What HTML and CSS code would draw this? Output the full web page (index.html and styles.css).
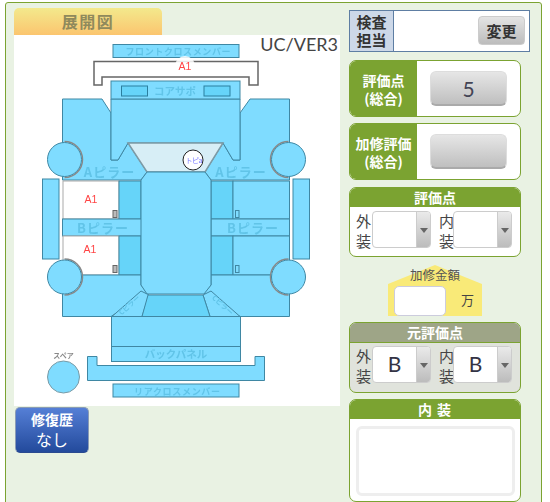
FILE: index.html
```html
<!DOCTYPE html>
<html lang="ja">
<head>
<meta charset="utf-8">
<title>展開図</title>
<link rel="stylesheet" href="styles.css">
</head>
<body>
<div class="frame">
  <div class="left">
    <div class="tab">展開図</div>
    <div class="diagram">
      <svg class="car" viewBox="14 35 326 371" width="326" height="371" xmlns="http://www.w3.org/2000/svg">
        <rect class="p" x="113" y="44.500" width="126" height="13"/>
        <text class="lbl s10" x="178" y="55" textLength="105">フロントクロスメンバー</text>
        <path class="bump" d="M94 85V61.500H258V85H249V77H102V85Z"/>
        <circle class="halo" cx="185" cy="66" r="10"/>
        <text class="a1" x="185" y="70">A1</text>

        <path class="p" d="M62.500 99H102L111 113V160H118L128 143L147 172L141 180H62.500Z"/>
        <path class="p" d="M289.500 99H250L240 113V160H233L223 143L205 172L211 180H289.500Z"/>
        <path class="p" d="M111 99H240V160H233L223 143H128L118 160H111Z"/>
        <rect class="p" x="111" y="81" width="129" height="18"/>
        <rect class="hole" x="121.500" y="86" width="26" height="10"/>
        <rect class="hole" x="204" y="86" width="26" height="10"/>
        <text class="lbl s11" x="175" y="95">コアサポ</text>
        <path class="glass" d="M128 143H223L205 172H147Z"/>
        <text class="lbl s13" x="109.500" y="177">Aピラー</text>
        <text class="lbl s13" x="241" y="177">Aピラー</text>

        <rect class="white" x="63" y="181" width="56" height="38"/>
        <rect class="d" x="119" y="181" width="22" height="38"/>
        <rect class="p" x="62.500" y="219" width="79" height="17"/>
        <text class="lbl s13" x="103" y="233">Bピラー</text>
        <rect class="white" x="63" y="236" width="56" height="39"/>
        <rect class="d" x="119" y="236" width="22" height="39"/>
        <rect class="d" x="211" y="181" width="22" height="38"/>
        <rect class="p" x="233" y="181" width="56.500" height="38"/>
        <rect class="p" x="211" y="219" width="78.500" height="17"/>
        <text class="lbl s13" x="253" y="233">Bピラー</text>
        <rect class="d" x="211" y="236" width="22" height="39"/>
        <rect class="p" x="233" y="236" width="56.500" height="39"/>
        <text class="a1" x="91" y="203">A1</text>
        <text class="a1" x="90" y="253">A1</text>
        <rect class="handle" x="113" y="210.500" width="4" height="7"/>
        <rect class="handle" x="113" y="265.500" width="4" height="7"/>
        <rect class="handle blue" x="235.500" y="210.500" width="3.500" height="7"/>
        <rect class="handle blue" x="235.500" y="265.500" width="3.500" height="7"/>

        <path class="p" d="M62.500 275H141V285L147 293L111 316.500H62.500Z"/>
        <path class="p" d="M289.500 275H211V285L204 293L240 316.500H289.500Z"/>
        <path class="p" d="M141 180L147 172H205L211 180V285L204 294H147L141 285Z"/>
        <path class="p" d="M112 316.500L141 291L149 295L142 316.500Z"/>
        <path class="p" d="M240 316.500L211 291L203 295L210 316.500Z"/>
        <path class="d" d="M142 316.500L148 295H203L210 316.500Z"/>
        <text class="lbl s8" transform="translate(131 307) rotate(-42)">Cピラー</text>
        <text class="lbl s8" transform="translate(221 307) rotate(42)">Cピラー</text>
        <rect class="p" x="111.500" y="316.500" width="129" height="30"/>
        <rect class="p" x="111.500" y="346.500" width="129" height="15"/>
        <text class="lbl s11" x="176" y="358">バックパネル</text>
        <path class="p" d="M87.500 356.500H97V365.500H255V356.500H264.500V380.500H87.500Z"/>
        <rect class="p" x="113" y="384" width="126" height="13"/>
        <text class="lbl s10" x="177" y="395" textLength="86">リアクロスメンバー</text>
        <rect class="p" x="42.500" y="179" width="16.500" height="80"/>
        <rect class="p" x="293" y="179" width="16.500" height="80"/>

        <path class="ring" d="M64.500 141.500A18 18 0 0 1 64.500 177.500"/>
        <path class="ring" d="M288.500 141.500A18 18 0 0 0 288.500 177.500"/>
        <path class="ring" d="M64.500 259A18 18 0 0 1 64.500 295"/>
        <path class="ring" d="M288.500 259A18 18 0 0 0 288.500 295"/>
        <circle class="wheel" cx="64.500" cy="159.500" r="17"/>
        <circle class="wheel" cx="288.500" cy="159.500" r="17"/>
        <circle class="wheel" cx="64.500" cy="277" r="17"/>
        <circle class="wheel" cx="288.500" cy="277" r="17"/>
        <circle class="spare" cx="63.500" cy="377" r="16"/>
        <text class="spare-l" x="63.500" y="358">スペア</text>
        <circle class="tag" cx="193" cy="160" r="10"/>
        <text class="tag-t" x="194" y="163" textLength="17">トピa</text>
      </svg>
      <div class="ver">UC/VER3</div>
    </div>
    <div class="history"><b>修復歴</b><span>なし</span></div>
  </div>
  <div class="right">
    <div class="inspector">
      <div class="insp-label">検査<br>担当</div>
      <div class="insp-body"><button class="change">変更</button></div>
    </div>
    <div class="score">
      <div class="score-label">評価点<br>(総合)</div>
      <div class="score-body"><div class="pill">5</div></div>
    </div>
    <div class="score">
      <div class="score-label">加修評価<br>(総合)</div>
      <div class="score-body"><div class="pill"></div></div>
    </div>
    <div class="card">
      <div class="card-h">評価点</div>
      <div class="selects">
        <span class="sl">外装</span><div class="sel"><i></i><em></em></div>
        <span class="sl sl2">内装</span><div class="sel"><i></i><em></em></div>
      </div>
    </div>
    <div class="amount">
      <svg class="house" viewBox="0 0 94 51" width="94" height="51" xmlns="http://www.w3.org/2000/svg"><path d="M0 19L47 0L94 19V51H0Z"/></svg>
      <div class="amount-t">加修金額</div>
      <div class="amount-r"><div class="amount-i"></div><span>万</span></div>
    </div>
    <div class="card old">
      <div class="card-h">元評価点</div>
      <div class="selects">
        <span class="sl">外装</span><div class="sel"><i>B</i><em></em></div>
        <span class="sl sl2">内装</span><div class="sel"><i>B</i><em></em></div>
      </div>
    </div>
    <div class="card memo">
      <div class="card-h">内 装</div>
      <div class="memo-b"><div class="area"></div></div>
    </div>
  </div>
</div>
</body>
</html>
```
FILE: styles.css
```css
* { box-sizing: border-box; }
html, body { margin: 0; height: 502px; overflow: hidden; background: #fff; }
body { font-family: "Noto Sans CJK JP", "Liberation Sans", sans-serif; color: #444; }

.frame {
  display: flex;
  width: 537px;
  height: 510px;
  margin: 2px 0 0 5px;
  padding: 5px 0 0 8px;
  background: #e9f2e3;
  border: 1px solid #7ba331;
  border-radius: 3px 3px 0 0;
}
.left { width: 326px; flex: none; }
.tab {
  width: 148px;
  height: 27px;
  font-size: 16px;
  font-weight: 700;
  line-height: 27px;
  text-align: center;
  letter-spacing: 1.500px;
  color: #8f8a5c;
  background: linear-gradient(#f3e98c, #fbc56f);
  border-radius: 5px 5px 0 0;
}
.diagram { position: relative; width: 326px; height: 371px; background: #fff; }
.car { display: block; filter: blur(.3px); }
.ver { position: absolute; top: -4px; right: 2px; font: 18px/26px Lato, sans-serif; color: #444; }

.p, .d, .wheel, .spare { fill: #7fdcff; stroke: #3f87a3; stroke-width: 1; }
.d { fill: #66d4f9; }
.hole { fill: #66d4f9; stroke: #2b7f9f; }
.white { fill: #fff; stroke: #aaa; stroke-width: 1; }
.glass { fill: #d7eef6; stroke: #7d9aa5; stroke-width: 1.500; }
.bump { fill: #fff; stroke: #666; stroke-width: 1.500; }
.halo { fill: #fff; opacity: .85; }
.ring { fill: #fff; stroke: #888; stroke-width: 1.500; }
.wheel { stroke: #3f87a3; }
.spare { stroke: #7a9aa5; }
.handle { fill: #bbb; stroke: #666; }
.handle.blue { fill: #7fdcff; stroke: #3f87a3; }
.tag { fill: #fff; stroke: #222; stroke-width: 1; }
.a1 { font: 10.500px "Liberation Sans", sans-serif; fill: #f44; text-anchor: middle; }
.lbl { fill: #61c4e8; text-anchor: middle; font-weight: 700; font-family: "Noto Sans CJK JP", sans-serif; }
.s8 { font-size: 7px; }
.s10 { font-size: 9px; }
.s11 { font-size: 10.500px; }
.s13 { font-size: 13px; letter-spacing: 1px; }
.spare-l { font-size: 7px; font-weight: 700; fill: #888; text-anchor: middle; }
.tag-t { font-size: 7px; fill: #77f; text-anchor: middle; }

.history {
  display: flex;
  flex-direction: column;
  align-items: center;
  width: 74px;
  height: 46px;
  margin: 1px 0 0 1px;
  padding-top: 2px;
  color: #fff;
  background: linear-gradient(#557fd6, #234a9c);
  border-radius: 5px;
  border: 1px solid #8a9bb5;
  border-bottom-color: #2a4a90;
}
.history b { font-size: 14px; line-height: 19px; }
.history span { font-size: 16px; line-height: 21px; }

.right {
  display: flex;
  flex-direction: column;
  flex: none;
  width: 181px;
  margin-left: 9px;
  padding-top: 2px;
}
.inspector {
  display: flex;
  width: 181px;
  height: 42px;
  background: #fff;
  border: 1px solid #5e7ea3;
}
.insp-label {
  width: 44px;
  font-size: 15px;
  font-weight: 700;
  line-height: 18px;
  padding-top: 2px;
  text-align: center;
  color: #333;
  background: #cdd8e8;
  border-right: 1px solid #5e7ea3;
}
.insp-body { flex: 1; display: flex; justify-content: flex-end; padding: 5px 4px 0 0; }
.change {
  width: 47px;
  height: 29px;
  padding: 0;
  font: 700 15px/27px "Noto Sans CJK JP", sans-serif;
  color: #333;
  background: linear-gradient(#e4e4e4, #bcbcbc);
  border: 1px solid #ccc;
  border-radius: 4px;
}
.score {
  display: flex;
  width: 172px;
  height: 57px;
  margin-top: 8px;
  overflow: hidden;
  background: #fff;
  border: 1px solid #7ba331;
  border-radius: 7px;
}
.score + .score { margin-top: 6px; }
.score-label {
  display: flex;
  align-items: center;
  justify-content: center;
  flex: none;
  width: 67px;
  font-size: 14px;
  font-weight: 700;
  line-height: 18px;
  text-align: center;
  color: #fff;
  background: #7ba331;
}
.score-body { flex: 1; padding: 10px 0 0 13px; }
.pill {
  width: 77px;
  height: 35px;
  font: 21px/34px Lato, sans-serif;
  text-align: center;
  color: #445;
  background: linear-gradient(#e6e6e6, #bfbfbf);
  border: 1px solid #ddd;
  border-bottom: 2px solid #aaa;
  border-radius: 6px;
}
.card {
  width: 172px;
  margin-top: 7px;
  overflow: hidden;
  background: #fff;
  border: 1px solid #7ba331;
  border-radius: 7px;
}
.card-h {
  height: 19px;
  font-size: 14px;
  font-weight: 700;
  line-height: 18px;
  text-align: center;
  color: #fff;
  background: #7ba331;
}
.selects { display: flex; height: 49px; padding: 4px 0 0 6px; }
.sl { flex: none; width: 16px; font-size: 15px; line-height: 20px; color: #444; }
.sl2 { width: 14px; margin-left: 8px; }
.sel {
  display: flex;
  flex: none;
  width: 59px;
  height: 37px;
  background: #fff;
  border: 1px solid #ccc;
  border-radius: 4px;
  overflow: hidden;
}
.sel i {
  flex: 1;
  font: normal 21px/33px Lato, sans-serif;
  text-align: center;
  color: #334;
}
.sel em {
  position: relative;
  width: 14px;
  background: linear-gradient(#eaeaea, #bcbcbc);
  border-left: 1px solid #ccc;
}
.sel em::after {
  content: "";
  position: absolute;
  top: 16px;
  left: 3px;
  border: 4px solid transparent;
  border-top: 5px solid #666;
  border-bottom: 0;
}
.amount {
  position: relative;
  width: 94px;
  height: 51px;
  margin: 8px 0 0 39px;
}
.house { position: absolute; inset: 0; fill: #f9ea78; }
.amount-t {
  position: relative;
  font-size: 12.500px;
  line-height: 19px;
  text-align: center;
  color: #555;
}
.amount-r { position: relative; display: flex; margin: 2px 0 0 6px; }
.amount-i {
  width: 52px;
  height: 30px;
  background: #fff;
  border: 1px solid #ccd;
  border-radius: 5px;
}
.amount-r span { margin: 4px 0 0 15px; font-size: 13px; line-height: 20px; color: #444; }
.old { margin-top: 6px; background: #e0e3dc; }
.old .card-h { background: #9ea587; border-bottom: 1px solid #7ba331; height: 20px; }
.old .selects { padding-top: 3px; }
.memo { height: 103px; margin-top: 6px; }
.memo-b { padding: 7px 5px 0 6px; }
.memo .card-h { letter-spacing: 1px; }
.area {
  width: 159px;
  height: 70px;
  background: #fff;
  border: 3px solid #eee;
  border-radius: 6px;
}
```
